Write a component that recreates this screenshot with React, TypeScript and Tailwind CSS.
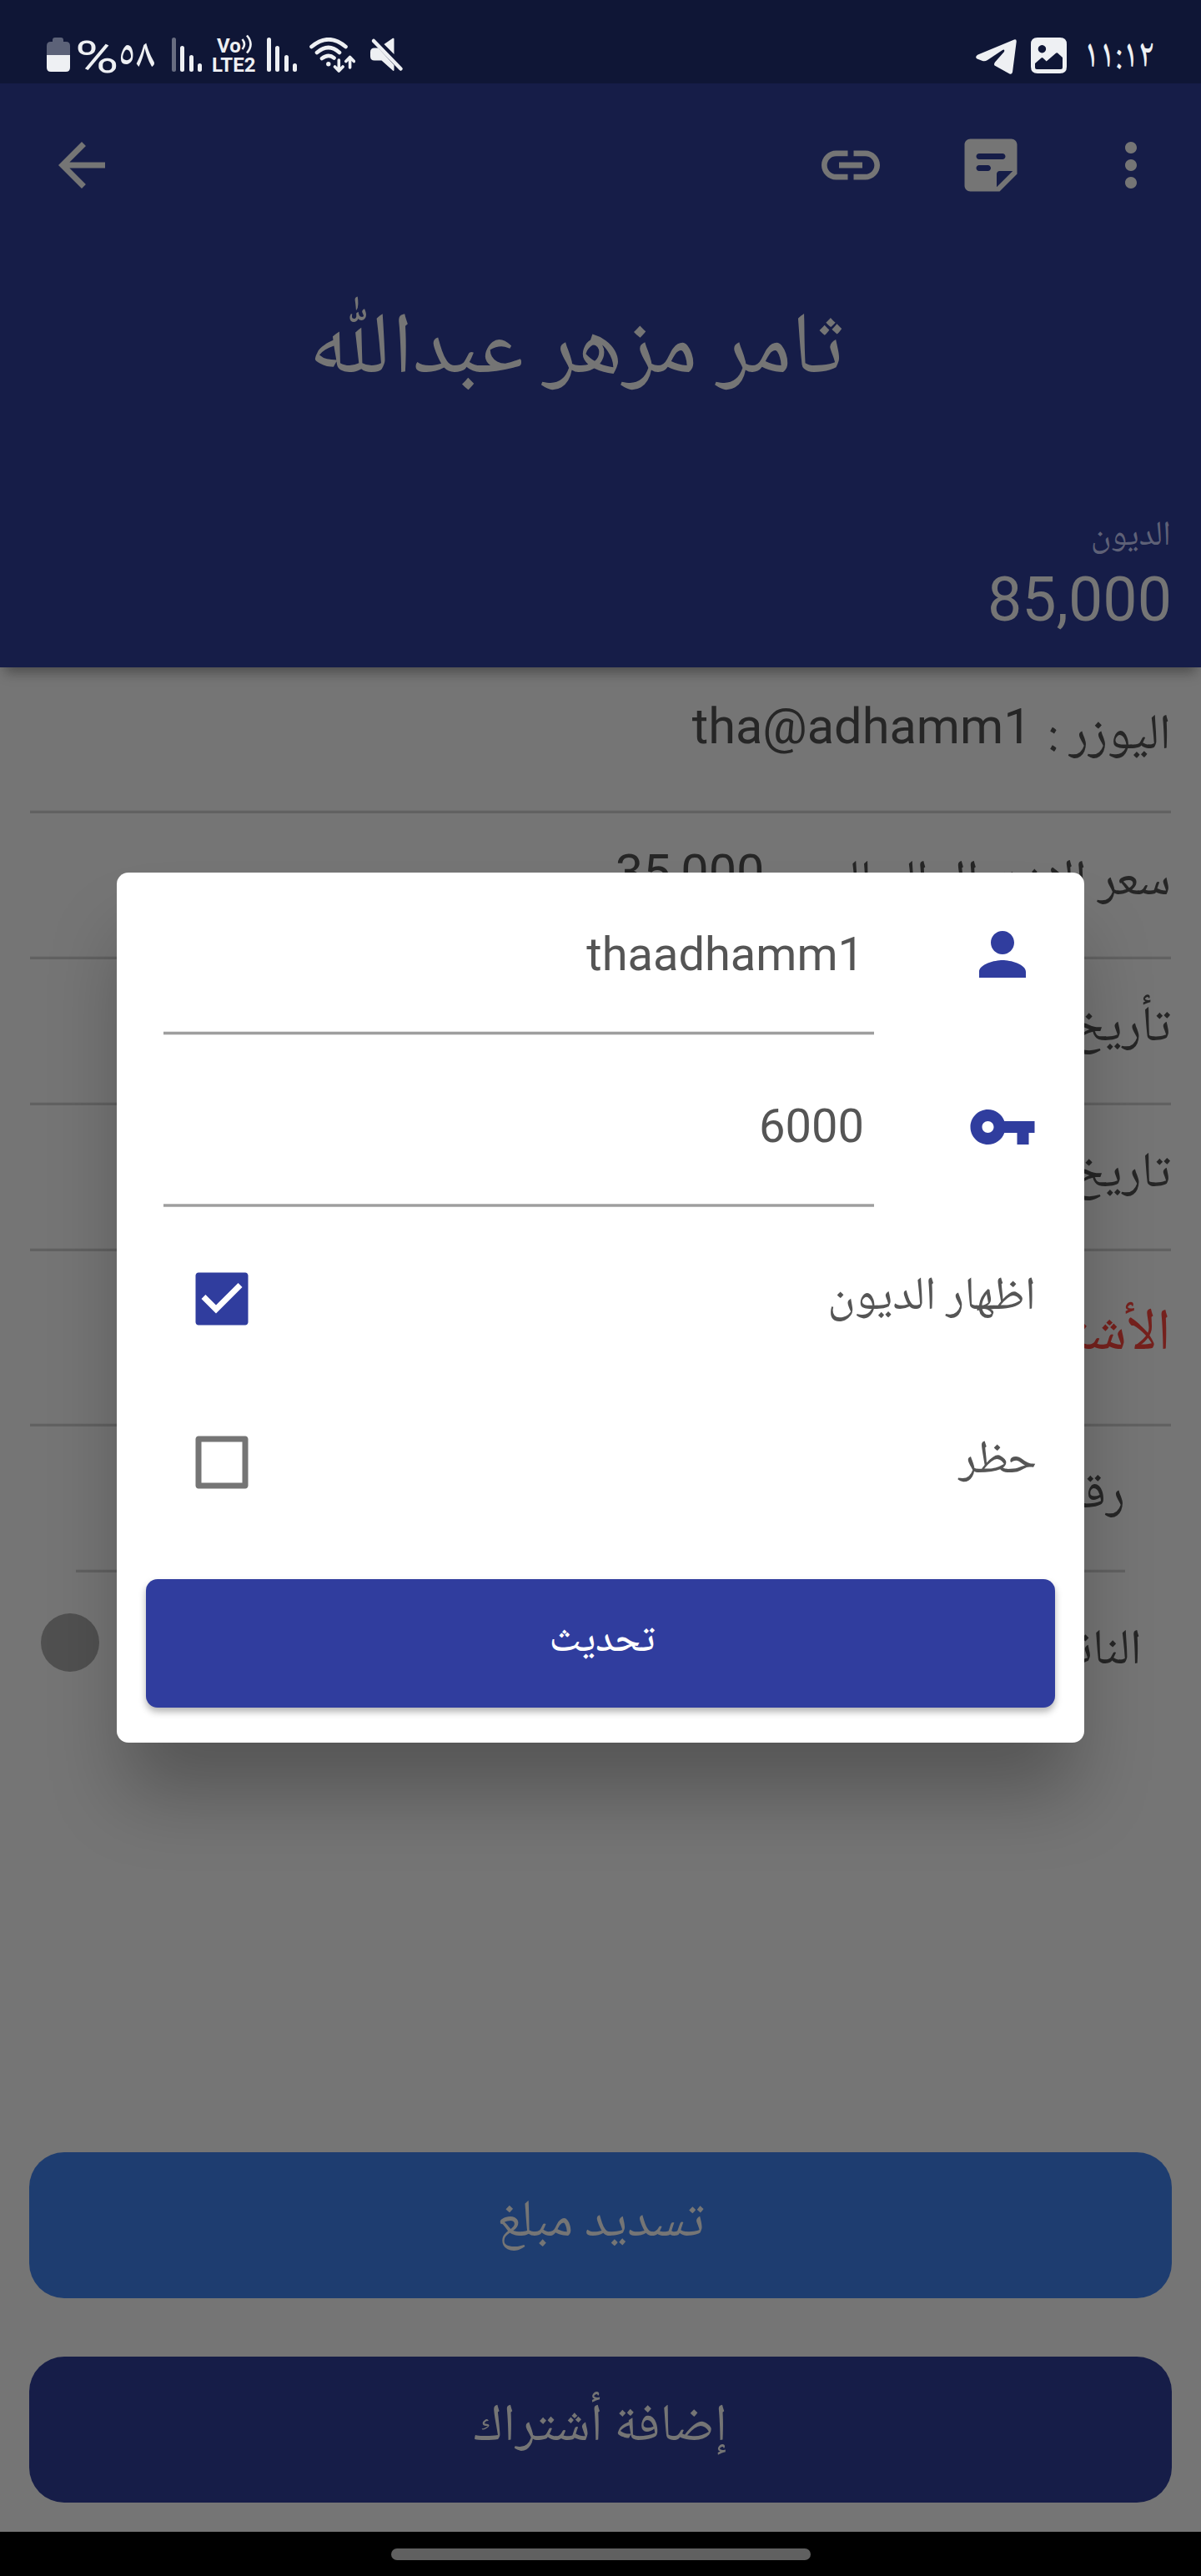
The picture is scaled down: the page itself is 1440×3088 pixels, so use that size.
import React from "react";

/* Arabic run whose baseline follows the surrounding Roboto line box. */
function Ar({ children, className = "" }: { children: React.ReactNode; className?: string }) {
  return (
    <div dir="rtl" className={`whitespace-nowrap font-[Roboto,sans-serif] ${className}`}>
      <span className="font-['Noto_Naskh_Arabic','Noto_Sans_Arabic',serif] leading-[0]">{children}</span>
    </div>
  );
}

function Icon({ d, className = "" }: { d: string; className?: string }) {
  return (
    <svg viewBox="0 0 24 24" className={`size-[84px] shrink-0 ${className}`} fill="currentColor" fillRule="evenodd">
      <path d={d} />
    </svg>
  );
}

const paths = {
  back: "M20 11H7.83l5.59-5.59L12 4l-8 8 8 8 1.41-1.41L7.83 13H20v-2z",
  link: "M3.9 12c0-1.71 1.39-3.1 3.1-3.1h4V7H7c-2.76 0-5 2.24-5 5s2.24 5 5 5h4v-1.9H7c-1.71 0-3.1-1.39-3.1-3.1zM8 13h8v-2H8v2zm9-6h-4v1.9h4c1.71 0 3.1 1.39 3.1 3.1s-1.39 3.1-3.1 3.1h-4V17h4c2.76 0 5-2.24 5-5s-2.24-5-5-5z",
  note: "M19 3H5c-1.1 0-2 .9-2 2v14c0 1.1.9 2 2 2h10l6-6V5c0-1.1-.9-2-2-2zM8 8h8c.55 0 1 .45 1 1s-.45 1-1 1H8c-.55 0-1-.45-1-1s.45-1 1-1zm3 6H8c-.55 0-1-.45-1-1s.45-1 1-1h3c.55 0 1 .45 1 1s-.45 1-1 1zm3 5.5V15c0-.55.45-1 1-1h4.5L14 19.5z",
  more: "M12 8c1.1 0 2-.9 2-2s-.9-2-2-2-2 .9-2 2 .9 2 2 2zm0 2c-1.1 0-2 .9-2 2s.9 2 2 2 2-.9 2-2-.9-2-2-2zm0 6c-1.1 0-2 .9-2 2s.9 2 2 2 2-.9 2-2-.9-2-2-2z",
  person: "M12 12c2.21 0 4-1.79 4-4s-1.79-4-4-4-4 1.79-4 4 1.79 4 4 4zm0 2c-2.67 0-8 1.34-8 4v2h16v-2c0-2.66-5.33-4-8-4z",
  key: "M12.65 10C11.83 7.67 9.61 6 7 6c-3.31 0-6 2.69-6 6s2.69 6 6 6c2.61 0 4.83-1.67 5.65-4H17v4h4v-4h2v-4H12.65zM7 14c-1.1 0-2-.9-2-2s.9-2 2-2 2 .9 2 2-.9 2-2 2z",
  checked: "M20 3H4c-.55 0-1 .45-1 1v16c0 .55.45 1 1 1h16c.55 0 1-.45 1-1V4c0-.55-.45-1-1-1zM10 17l-5-5 1.41-1.41L10 14.17l7.59-7.59L19 8l-9 9z",
  unchecked: "M20 3H4c-.55 0-1 .45-1 1v16c0 .55.45 1 1 1h16c.55 0 1-.45 1-1V4c0-.55-.45-1-1-1zM19 19H5V5h14v14z",
};

function StatusBar() {
  return (
    <div className="flex h-[100px] items-start bg-[#0f1636] pt-[45px] text-[#eef0f3]">
      <svg className="ml-[56px] h-[41px] w-7 shrink-0" viewBox="0 0 28 41" fill="currentColor">
        <path opacity=".35" d="M7 5V3q0-3 3-3h7q3 0 3 3v2h3q5 0 5 5v11H0V10q0-5 5-5z" />
        <path d="M0 21h28v15q0 5-5 5H5q-5 0-5-5z" />
      </svg>
      <div className="ml-[6px] h-10 w-[51px] font-[Roboto,sans-serif] text-[54px] leading-[48px]">
        <div className="w-10 origin-left scale-x-[1.32]">%</div>
      </div>
      <Ar className="ml-[2px] h-10 w-[43px] text-[49px] leading-[37px] font-medium">٥٨</Ar>
      <svg className="ml-[20px] h-[41px] w-9 shrink-0" viewBox="0 0 36 41" fill="currentColor">
        <rect width="5" height="41" rx="2.5" opacity=".4" />
        <rect x="10" y="10" width="5" height="31" rx="2.5" />
        <rect x="21" y="21" width="5" height="20" rx="2.5" />
        <rect x="31" y="31" width="5" height="10" rx="2.5" />
      </svg>
      <div className="ml-[12px] w-[54px] shrink-0 font-[Roboto,sans-serif] text-[24px] font-bold">
        <div className="flex h-[22px] items-start pl-[6px]">
          <span className="block w-[27px] text-[24px] leading-[20px]">Vo</span>
          <svg className="-mt-1 ml-0.5 h-6 w-4" viewBox="0 0 16 24" fill="none" stroke="currentColor" strokeWidth="2.6">
            <path d="M1.5 6q5 6 0 12M7 1.500q9 10.500 0 21" />
          </svg>
        </div>
        <span className="block leading-[22px]">LTE2</span>
      </div>
      <svg className="ml-[12px] h-[41px] w-9 shrink-0" viewBox="0 0 36 41" fill="currentColor">
        <rect width="5" height="41" rx="2.5" />
        <rect x="10" y="10" width="5" height="31" rx="2.5" />
        <rect x="21" y="21" width="5" height="20" rx="2.5" />
        <rect x="31" y="31" width="5" height="10" rx="2.5" />
      </svg>
      <svg className="ml-[14px] h-[42px] w-14 shrink-0" viewBox="0 0 56 42" fill="none" stroke="currentColor" strokeLinecap="round" strokeLinejoin="round">
        <path strokeWidth="4.600" d="M3.500 11Q24-6.500 44.500 11M10 18q14-12 27 0M16 25q8-6 14.500-.5" />
        <circle cx="23.800" cy="31.800" r="2.700" fill="currentColor" stroke="none" />
        <path strokeWidth="3.600" d="M36.300 27v12.500M31.500 35l4.800 5 4.800-5M49.600 36V24M44.800 28.500l4.800-5 4.800 5" />
      </svg>
      <svg className="ml-[18px] h-[42px] w-10 shrink-0" viewBox="0 0 40 42" fill="currentColor">
        <path d="M16.500 8 27 .8q1.500-.6 1.500 1V20zM5 12.500h4.500l19 20.500v6.500l-1 .5-14-12.500H5q-5 0-5-5v-5q0-5 5-5z" />
        <path d="M4 4l32.500 33.500" stroke="currentColor" strokeWidth="4.500" strokeLinecap="round" />
      </svg>
      <div className="grow" />
      <svg className="mt-[2px] h-[42px] w-[49px] shrink-0" viewBox="0 0 49 42" fill="currentColor">
        <path d="M46 .4Q49-.6 48.700 3L44 39.500Q43 43 40 41.300L22.500 31.500Q21.300 30 23 27.500L34 15Q35 11.500 32 13L14 25Q11 27 8 26L1.500 23.500Q-1.500 21.500 2 18.800z" />
      </svg>
      <svg className="ml-[17px] h-[43px] w-[43px] shrink-0" viewBox="0 0 43 43" fill="currentColor" fillRule="evenodd">
        <path d="M8 0h27q8 0 8 8v27q0 8-8 8H8q-8 0-8-8V8q0-8 8-8zm5.400 9a4.700 4.700 0 1 0 .01 0zM5 31v5q0 2 2 2h29q2 0 2-2V24l-6-5.500q-1-.8-2 .2L18.700 28.500 14.500 24.500q-1-1-2 0z" />
      </svg>
      <Ar className="mr-[56px] ml-[22px] h-10 w-[83px] origin-right scale-x-[0.85] text-[48px] leading-[37px] font-medium">١١:١٢</Ar>
    </div>
  );
}

function Header() {
  return (
    <div className="relative h-[700px] bg-[#161d48] text-[#757575] shadow-[0_12px_14px_-6px_rgba(0,0,0,0.35)]">
      <div className="flex h-[196px] items-center pr-[42px] pl-[56px]">
        <Icon d={paths.back} />
        <div className="grow" />
        <Icon d={paths.link} />
        <Icon d={paths.note} className="ml-[84px]" />
        <Icon d={paths.more} className="ml-[84px]" />
      </div>
      <Ar className="mt-[45px] pr-[58px] text-center text-[104.5px] leading-[140px]">{"ثامر مزهر عبدالل\u0651\u0670ه"}</Ar>
      <div className="mt-[128px] flex flex-col px-[36px]">
        <Ar className="text-[41.5px] leading-[60px] text-[#5e6177]">الديون</Ar>
        <div className="-mr-px mt-[5px] text-right font-[Roboto,sans-serif] text-[73.5px] leading-[90px]">85,000</div>
      </div>
    </div>
  );
}

function Divider() {
  return <div className="h-1 border-t border-[#6f6f6f] bg-[#616161]" />;
}

function Row({ label, value, gap = "mr-[20px]" }: { label: string; value?: string; gap?: string }) {
  return (
    <div className="flex h-[175px] flex-col justify-between">
      <div dir="rtl" className="flex pt-[37px] text-[#262626]">
        <Ar className="text-[59.5px] leading-[80px]">{label}</Ar>
        {value && (
          <div dir="ltr" className={`-mt-[6px] font-[Roboto,sans-serif] text-[59.5px] leading-[80px] ${gap}`}>{value}</div>
        )}
      </div>
      <Divider />
    </div>
  );
}

function Details() {
  return (
    <div className="h-[1780px] px-[36px]">
      <Row label="اليوزر :" value="tha@adhamm1" />
      <Row label="سعر الاشتراك الحالي :" value="35,000" gap="mr-[36px]" />
      <Row label="تأريخ" />
      <Row label="تاريخ" />
      <div className="flex h-[210px] flex-col justify-between">
        <Ar className="pt-[53px] text-[70px] leading-[80px] text-[#75211d]">الأشتراك</Ar>
        <Divider />
      </div>
      <div className="px-[55px]">
        <Row label="رقم" />
      </div>
      <div className="flex items-start justify-between pr-[35px] pl-[13px]">
        <div className="mt-[49px] size-[70px] rounded-full bg-[#505050]" />
        <Ar className="pt-[49px] text-[59.5px] leading-[80px] text-[#262626]">النانو</Ar>
      </div>
    </div>
  );
}

function Actions() {
  return (
    <div className="flex h-[455px] flex-col gap-[70px] px-[35px] leading-[80px] text-[#757575]">
      <button className="flex h-[175px] items-center justify-center rounded-[42px] bg-[#1e3d70] pb-[18px]">
        <Ar className="text-[62.5px]">تسديد مبلغ</Ar>
      </button>
      <button className="flex h-[175px] items-center justify-center rounded-[42px] bg-[#161d48] pb-[18px]">
        <Ar className="text-[63px]">إضافة أشتراك</Ar>
      </button>
    </div>
  );
}

function Dialog() {
  return (
    <div className="absolute top-[1046px] left-[140px] h-[1043px] w-[1160px] rounded-[14px] bg-white text-[#555] shadow-[0_70px_90px_-10px_rgba(0,0,0,0.27)]">
      <div className="flex h-[195px] justify-between pr-[56px] pl-[56px] text-[#303d9e]">
        <div className="flex w-[852px] flex-col justify-between">
          <div className="pt-[65px] pr-[12px] text-right font-[Roboto,sans-serif] text-[56px] leading-[66px] text-[#555]">thaadhamm1</div>
          <div className="h-[5px] border-y border-[#e3e3e3] bg-[#9e9e9e]" />
        </div>
        <Icon d={paths.person} className="mt-[56px]" />
      </div>
      <div className="flex h-[206px] justify-between pr-[56px] pl-[56px] text-[#303d9e]">
        <div className="flex w-[852px] flex-col justify-between">
          <div className="pt-[76px] pr-[12px] text-right font-[Roboto,sans-serif] text-[56px] leading-[66px] text-[#555]">6000</div>
          <div className="h-1 border-y border-[#b8b8b8] bg-[#9e9e9e]" />
        </div>
        <Icon d={paths.key} className="mt-[68px]" />
      </div>
      <div className="mt-3 flex h-[196px] items-center justify-between pr-[58px] pl-[84px]">
        <Icon d={paths.checked} className="text-[#303d9e]" />
        <Ar className="pb-[15px] text-[56px] leading-[84px]">اظهار الديون</Ar>
      </div>
      <div className="flex h-[196px] items-center justify-between pr-[57px] pl-[84px]">
        <Icon d={paths.unchecked} className="text-[#757575]" />
        <Ar className="pb-[15px] text-[56px] leading-[84px]">حظر</Ar>
      </div>
      <button className="mt-[42px] ml-[35px] flex h-[154px] w-[1090px] items-center justify-center rounded-[14px] bg-[#303d9e] pb-[14px] pl-1 text-white shadow-[0_5px_8px_rgba(0,0,0,0.3)]">
        <Ar className="text-[48px] leading-[80px] font-medium">تحديث</Ar>
      </button>
    </div>
  );
}

export default function App() {
  return (
    <div className="relative flex h-[3088px] w-[1440px] flex-col overflow-hidden bg-[#757575]">
      <StatusBar />
      <Header />
      <Details />
      <Actions />
      <div className="flex h-[53px] justify-center bg-black pt-5">
        <div className="h-[14px] w-[503px] rounded-full bg-[#606060]" />
      </div>
      <Dialog />
    </div>
  );
}
